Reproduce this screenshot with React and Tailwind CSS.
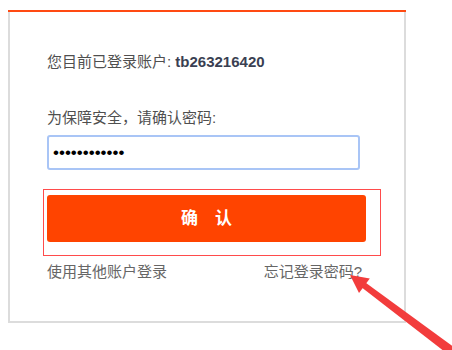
export default function App() {
  return (
    <div
      className="relative w-[452px] h-[350px] overflow-hidden bg-white pt-[10px] pl-[8px]"
      style={{ fontFamily: '"Liberation Sans", "Noto Sans CJK SC", sans-serif' }}
    >
      <div className="w-[398px]">
        <div className="h-[2px] bg-[#ff4a12]" />
        <div className="h-[311px] border-x-2 border-b-2 border-[#dcdcdc] pl-[37px] pt-[40px]">
          <p className="text-[15px] leading-[20px] text-[#4f4f4f]">
            您目前已登录账户: <span className="font-bold text-[#3a3f52]">tb263216420</span>
          </p>
          <p className="mt-[36px] text-[15px] leading-[20px] text-[#4f4f4f]">为保障安全，请确认密码:</p>
          <input
            type="password"
            readOnly
            value="123456789012"
            className="mt-[7px] block h-[35px] w-[313px] rounded-[3px] border-2 border-[#a9c5f6] px-[4px] text-[17px] text-black outline-none"
          />
          <div className="mt-[19px] -ml-[4px] h-[67px] w-[338px] border border-[#ff4b4b] pl-[3px] pt-[5px]">
            <button
              type="button"
              className="flex h-[47px] w-[319px] items-center justify-center rounded-[3px] bg-[#ff4400] text-[17px] font-bold text-white"
            >
              确　认
            </button>
          </div>
          <div className="mt-[6px] flex w-[315px] justify-between text-[15px] leading-[20px] text-[#666]">
            <span>使用其他账户登录</span>
            <span>忘记登录密码?</span>
          </div>
        </div>
      </div>

      {/* annotation arrow */}
      <svg className="absolute left-0 top-0" width="452" height="350" viewBox="0 0 452 350" aria-hidden="true">
        <polygon points="350,275 369.8,278.6 359,293" fill="#f23c3c" />
        <polygon points="360.5,286.5 364,281.5 473,361 467,369" fill="#f23c3c" />
      </svg>
    </div>
  );
}
